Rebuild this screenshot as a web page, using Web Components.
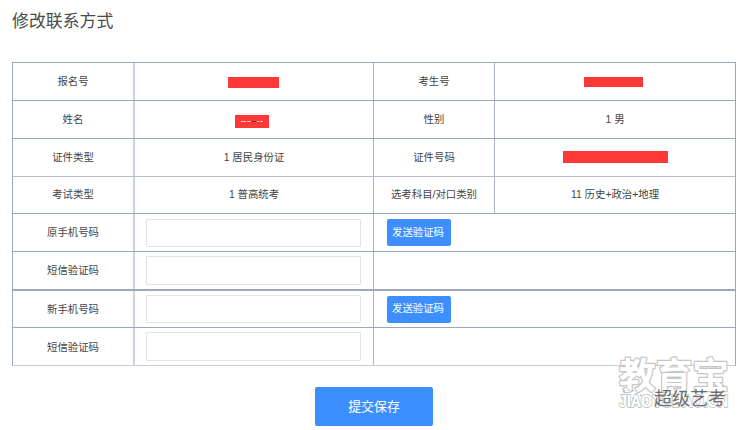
<!DOCTYPE html>
<html lang="zh-CN">
<head>
<meta charset="utf-8">
<title>修改联系方式</title>
<style>
	body {
		margin: 0;
		background: #fff;
		color: #444;
		font-family: "Liberation Sans", "Noto Sans CJK SC", sans-serif;
		font-size: 10.4px;
	}
</style>
</head>
<body>
<contact-page>
	<span slot="title">修改联系方式</span>
	<info-table>
		<info-row style="--row:38px">
			<info-cell>报名号</info-cell>
			<info-cell><mask-bar style="--w:51px;--h:11px;--y:1px;--x:-1px"></mask-bar></info-cell>
			<info-cell>考生号</info-cell>
			<info-cell><mask-bar style="--w:59px;--h:10px;--x:-2px"></mask-bar></info-cell>
		</info-row>
		<info-row style="--row:38px">
			<info-cell>姓名</info-cell>
			<info-cell><mask-bar dashed style="--w:34px;--h:13px;--y:2px;--x:-2px"></mask-bar></info-cell>
			<info-cell>性别</info-cell>
			<info-cell>1 男</info-cell>
		</info-row>
		<info-row soft style="--row:38px">
			<info-cell>证件类型</info-cell>
			<info-cell>1 居民身份证</info-cell>
			<info-cell>证件号码</info-cell>
			<info-cell><mask-bar style="--w:105px;--h:12px;--y:-1px"></mask-bar></info-cell>
		</info-row>
		<info-row style="--row:37px">
			<info-cell>考试类型</info-cell>
			<info-cell>1 普高统考</info-cell>
			<info-cell>选考科目/对口类别</info-cell>
			<info-cell>11 历史+政治+地理</info-cell>
		</info-row>
		<info-row wide style="--row:38px">
			<info-cell>原手机号码</info-cell>
			<info-cell><text-field></text-field></info-cell>
			<info-cell><blue-button>发送验证码</blue-button></info-cell>
		</info-row>
		<info-row wide thick style="--row:39px">
			<info-cell>短信验证码</info-cell>
			<info-cell><text-field tall></text-field></info-cell>
			<info-cell></info-cell>
		</info-row>
		<info-row wide low style="--row:37px">
			<info-cell>新手机号码</info-cell>
			<info-cell><text-field></text-field></info-cell>
			<info-cell><blue-button>发送验证码</blue-button></info-cell>
		</info-row>
		<info-row wide low last style="--row:38px">
			<info-cell>短信验证码</info-cell>
			<info-cell><text-field tall></text-field></info-cell>
			<info-cell></info-cell>
		</info-row>
	</info-table>
	<blue-button large slot="action">提交保存</blue-button>
	<water-mark slot="mark"></water-mark>
</contact-page>

<script>
class ContactPage extends HTMLElement {
	constructor() {
		super();
		this.attachShadow({ mode: 'open' });
		this.shadowRoot.innerHTML = `
		<style>
			:host {
				display: block;
				position: relative;
				box-sizing: border-box;
				width: 749px;
				height: 430px;
				padding: 10px 13px 0 12px;
				overflow: hidden;
			}
			h1 {
				margin: 0 0 28px;
				height: 24px;
				font-size: 16.9px;
				line-height: 24px;
				font-weight: 400;
				color: #4a4a4a;
			}
			.actions {
				display: flex;
				justify-content: center;
				padding-top: 21px;
			}
		</style>
		<h1><slot name="title"></slot></h1>
		<slot></slot>
		<div class="actions"><slot name="action"></slot></div>
		<slot name="mark"></slot>
		`
	}
}
customElements.define('contact-page', ContactPage);

class InfoTable extends HTMLElement {
	constructor() {
		super();
		this.attachShadow({ mode: 'open' });
		this.shadowRoot.innerHTML = `
		<style>
			:host {
				display: flex;
				flex-direction: column;
				border: solid #9ca6c0;
				border-width: 1px 1px 0;
			}
		</style>
		<slot></slot>
		`
	}
}
customElements.define('info-table', InfoTable);

class InfoRow extends HTMLElement {
	constructor() {
		super();
		this.attachShadow({ mode: 'open' });
		this.shadowRoot.innerHTML = `
		<style>
			:host {
				display: grid;
				grid-template-columns: 122px 239px 121px 1fr;
				box-sizing: border-box;
				height: var(--row);
				border-bottom: 1px solid #9ca6bc;
			}
			:host([wide]) {
				grid-template-columns: 122px 239px 1fr;
			}
			:host([soft]) {
				border-bottom-color: #b4bccd;
			}
			:host([thick]) {
				border-bottom: 2px solid #9ba9c0;
			}
			:host([last]) {
				border-bottom-color: #cccfdb;
			}
			::slotted(info-cell) {
				border-right: 1px solid #abb3c8;
			}
			::slotted(info-cell:first-child) {
				border-right: 2px solid #ccd2e0;
			}
			::slotted(info-cell:last-child) {
				border-right: 0;
			}
			:host([wide]) ::slotted(info-cell:last-child) {
				justify-content: flex-start;
				padding-left: 13px;
			}
			:host([low]) ::slotted(info-cell:first-child) {
				padding-top: 2px;
			}
		</style>
		<slot></slot>
		`
	}
}
customElements.define('info-row', InfoRow);

class InfoCell extends HTMLElement {
	constructor() {
		super();
		this.attachShadow({ mode: 'open' });
		this.shadowRoot.innerHTML = `
		<style>
			:host {
				display: flex;
				align-items: center;
				justify-content: center;
				min-width: 0;
				line-height: 16px;
				white-space: nowrap;
			}
		</style>
		<slot></slot>
		`
	}
}
customElements.define('info-cell', InfoCell);

// red bar laid over private values
class MaskBar extends HTMLElement {
	constructor() {
		super();
		this.attachShadow({ mode: 'open' });
		this.shadowRoot.innerHTML = `
		<style>
			:host {
				display: block;
				width: var(--w);
				height: var(--h);
				background: #fd3838;
				transform: translate(var(--x, 0), var(--y, 0));
			}
			svg { display: none; }
			:host([dashed]) svg { display: block; }
		</style>
		<svg width="34" height="13" viewBox="0 0 34 13">
			<path d="M6 6.5H11M12 6.5H16M22 6.5H24M25 6.5H28" stroke="#fcc"/>
			<path d="M16 6.5H21" stroke="#733"/>
		</svg>
		`
	}
}
customElements.define('mask-bar', MaskBar);

class TextField extends HTMLElement {
	constructor() {
		super();
		this.attachShadow({ mode: 'open' });
		this.shadowRoot.innerHTML = `
		<style>
			:host {
				display: block;
				margin-right: 1px;
			}
			input {
				display: block;
				box-sizing: border-box;
				width: 215px;
				height: 28px;
				margin: 0;
				padding: 0 8px;
				border: 1px solid #e4e4e4;
				border-radius: 1px;
				background: #fff;
				outline: none;
			}
			:host([tall]) input { height: 29px; }
		</style>
		<input type="text">
		`
	}
}
customElements.define('text-field', TextField);

class BlueButton extends HTMLElement {
	constructor() {
		super();
		this.attachShadow({ mode: 'open' });
		this.shadowRoot.innerHTML = `
		<style>
			:host { display: block; }
			button {
				display: block;
				width: 64px;
				height: 27px;
				padding: 0 2px 0 0;
				border: 0;
				border-radius: 2px;
				background: #3d8fff;
				color: #fff;
				font: inherit;
				line-height: 16px;
			}
			:host([large]) button {
				width: 118px;
				height: 39px;
				padding: 1px 0 0;
				font-size: 12.9px;
				line-height: 20px;
			}
		</style>
		<button type="button"><slot></slot></button>
		`
	}
}
customElements.define('blue-button', BlueButton);

// site stamp lying over the bottom right corner
class WaterMark extends HTMLElement {
	constructor() {
		super();
		this.attachShadow({ mode: 'open' });
		this.shadowRoot.innerHTML = `
		<style>
			:host {
				position: absolute;
				left: 609px;
				top: 350px;
			}
			svg { display: block; }
			text { font-family: "Liberation Sans", "Noto Sans CJK SC", sans-serif; }
			.rim {
				fill: #fff;
				stroke: #c6c6c6;
				stroke-linejoin: round;
				paint-order: stroke;
				font-weight: 700;
			}
			.big { stroke-width: 2.4; }
			.latin { stroke-width: 1.8; }
		</style>
		<svg width="140" height="70" viewBox="0 0 140 70">
			<text class="rim big" x="10" y="38.5" font-size="36" textLength="110" lengthAdjust="spacingAndGlyphs">教育宝</text>
			<g fill="none" stroke="#888" stroke-width="1" stroke-dasharray="1.5 3">
				<ellipse cx="20" cy="46" rx="8" ry="6"/>
				<ellipse cx="30" cy="51" rx="7" ry="6"/>
			</g>
			<text class="rim latin" x="10" y="56.5" font-size="16" textLength="109" lengthAdjust="spacingAndGlyphs">JIAOYUBAO.CN</text>
			<text x="45" y="55" font-size="18" fill="#555" fill-opacity=".85" textLength="72">超级艺考</text>
		</svg>
		`
	}
}
customElements.define('water-mark', WaterMark);
</script>
</body>
</html>
